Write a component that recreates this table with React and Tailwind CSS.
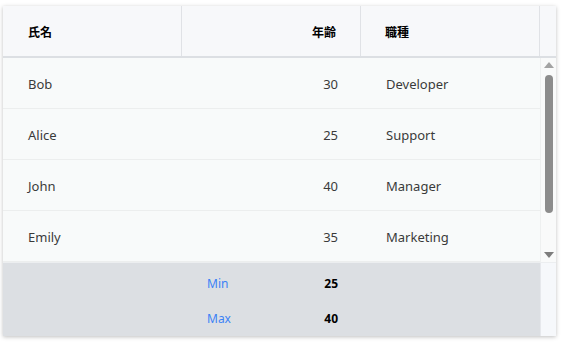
import React from 'react';

const rows = [
  { name: 'Bob', age: 30, job: 'Developer' },
  { name: 'Alice', age: 25, job: 'Support' },
  { name: 'John', age: 40, job: 'Manager' },
  { name: 'Emily', age: 35, job: 'Marketing' },
];

const summary = [
  { label: 'Min', value: 25 },
  { label: 'Max', value: 40 },
];

const font = { fontFamily: '"Noto Sans", "Noto Sans CJK JP", sans-serif' };

export default function App() {
  return (
    <div className="w-[561px] h-[343px] bg-white pt-[6px] pl-[3px]" style={font}>
      <div className="w-[553px] h-[330px] flex flex-col bg-[#f8fafa] shadow-[0_1px_4px_rgba(0,0,0,0.25)] overflow-hidden">
        {/* Header */}
        <div className="flex h-[52px] bg-[#f7f8fa] border-b-2 border-[#dcdfe3] shrink-0">
          <div className="w-[179px] border-r border-[#e0e2e6] flex items-center pl-[25px] pt-[4px] text-[12px] font-bold text-black">
            氏名
          </div>
          <div className="w-[179px] border-r border-[#e0e2e6] flex items-center justify-end pr-[24px] pt-[4px] text-[12px] font-bold text-black">
            年齢
          </div>
          <div className="w-[179px] border-r border-[#e0e2e6] flex items-center pl-[24px] pt-[4px] text-[12px] font-bold text-black">
            職種
          </div>
          <div className="flex-1" />
        </div>

        {/* Body */}
        <div className="flex h-[204px] shrink-0">
          <div className="w-[537px]">
            {rows.map((r) => (
              <div key={r.name} className="flex h-[51px] border-b border-[#eceeee] pt-[4px] text-[13px] text-[#3a3a3a]">
                <div className="w-[179px] flex items-center pl-[25px]">{r.name}</div>
                <div className="w-[179px] flex items-center justify-end pr-[23px]">{r.age}</div>
                <div className="w-[179px] flex items-center pl-[25px]">{r.job}</div>
              </div>
            ))}
          </div>
          {/* Scrollbar */}
          <div className="flex-1 flex flex-col items-center bg-[#f9fafa] border-l border-[#eef0f0]">
            <svg width="10" height="6" viewBox="0 0 10 6" className="mt-[4px]">
              <path d="M5 0 L10 6 L0 6 Z" fill="#a3a3a3" />
            </svg>
            <div className="w-[8px] h-[138px] mt-[7px] rounded-full bg-[#8c8c8c]" />
            <svg width="10" height="6" viewBox="0 0 10 6" className="mt-auto mb-[4px]">
              <path d="M0 0 L10 0 L5 6 Z" fill="#7d7d7d" />
            </svg>
          </div>
        </div>

        {/* Footer */}
        <div className="flex flex-1 border-t border-[#eceef0]">
          <div className="w-[537px] bg-[#dcdfe3] pt-[3px]">
            {summary.map((s) => (
              <div key={s.label} className="flex h-[35px] text-[12px]">
                <div className="w-[179px]" />
                <div className="w-[179px] flex items-center justify-between pl-[25px] pr-[23px]">
                  <span className="text-[#3b82f6]">{s.label}</span>
                  <span className="font-bold text-black">{s.value}</span>
                </div>
                <div className="w-[179px]" />
              </div>
            ))}
          </div>
          <div className="flex-1 bg-[#f6f8fb] border-l border-[#e6e8ec]" />
        </div>
      </div>
    </div>
  );
}
